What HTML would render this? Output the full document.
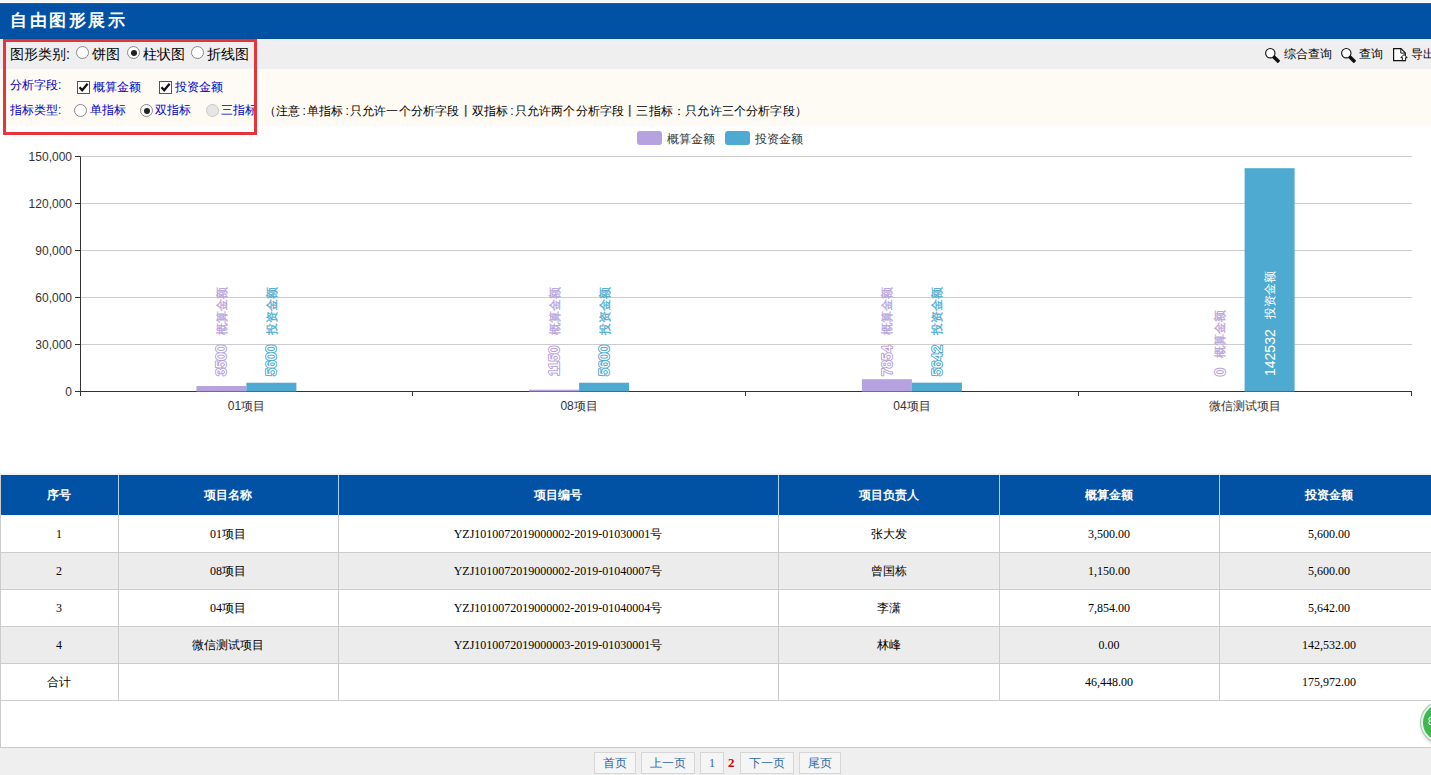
<!DOCTYPE html>
<html><head><meta charset="utf-8"><style>
*{box-sizing:border-box}
html,body{margin:0;padding:0}
body{width:1431px;height:775px;overflow:hidden;position:relative;background:#fff;font-family:"Liberation Sans",sans-serif;color:#000}
.abs{position:absolute}
#topstrip{left:0;top:0;width:1431px;height:2px;background:#f3f6fa}
#hdr{left:0;top:3px;width:1431px;height:36px;background:#0152a4;border-bottom:1px solid #0a4a8e}
#hdr span{position:absolute;left:10px;top:8px;font-size:17px;line-height:20px;color:#fff;letter-spacing:2.6px;font-weight:bold}
#tool{left:0;top:39px;width:1431px;height:30px;background:linear-gradient(#e2f1f8 0px,#e2f1f8 1px,#eef0ee 3px,#f1edf3 5px,#efefef 9px)}
#toolline{display:none}
#cream{left:0;top:69px;width:1431px;height:57px;background:#fefbf5}
#redbox{left:3px;top:39px;width:254px;height:96px;border:3px solid #e6353a}
.t14{font-size:14px;line-height:16px;white-space:nowrap}
.t12{font-size:12px;line-height:14px;white-space:nowrap}
.radio{position:absolute;width:13px;height:13px;border-radius:50%;border:1px solid #8a8a8a;background:#fff}
.radio.on::after{content:"";position:absolute;left:2.5px;top:2.5px;width:6px;height:6px;border-radius:50%;background:#222}
.radio.dis{background:#e6e6e6;border-color:#c8c8c8}
.chk{position:absolute;width:13px;height:13px;border:1px solid #555;background:#fff}
.blue{color:#0000c4}
.cell{position:absolute;text-align:center;font-size:12px;white-space:nowrap}
.th{color:#fff;font-weight:bold;line-height:40px;top:475px;height:40px}
.td{font-family:"Liberation Serif",serif;line-height:38px;height:37px}
#pager{left:0;top:747px;width:1431px;height:28px;background:#efefef;border-top:1px solid #cacaca}
.pbtn{position:absolute;top:752px;height:22px;border:1px solid #d6d6d6;background:#f5f5f5;color:#2c67a8;font-size:12px;line-height:20px;text-align:center}
</style></head><body>
<div id="topstrip" class="abs"></div><div class="abs" style="left:0;top:2px;width:1431px;height:1px;background:#fffffa"></div>
<div id="hdr" class="abs"><span>自由图形展示</span></div><div class="abs" style="left:0;top:3px;width:1431px;height:1px;background:#2f5a86"></div>
<div id="tool" class="abs"></div><div id="toolline" class="abs"></div><div id="cream" class="abs"></div>
<div class="abs t14" style="left:10px;top:46px">图形类别:</div>
<div class="radio" style="left:76px;top:46px"></div><div class="abs t14" style="left:92px;top:46px">饼图</div>
<div class="radio on" style="left:127px;top:46px"></div><div class="abs t14" style="left:143px;top:46px">柱状图</div>
<div class="radio" style="left:191px;top:46px"></div><div class="abs t14" style="left:207px;top:46px">折线图</div>
<svg class="abs" style="left:1264px;top:47px" width="16" height="16" viewBox="0 0 16 16"><circle cx="6.3" cy="6.2" r="4.7" fill="#fff" stroke="#111" stroke-width="1.1"/><path d="M9.2 10.6 L10.6 9.2 L15.2 13.8 L13.8 15.2 Z" fill="#111" stroke="#111" stroke-width="1.6" stroke-linejoin="round"/></svg>
<div class="abs t12" style="left:1284px;top:47px">综合查询</div>
<svg class="abs" style="left:1340px;top:47px" width="16" height="16" viewBox="0 0 16 16"><circle cx="6.3" cy="6.2" r="4.7" fill="#fff" stroke="#111" stroke-width="1.1"/><path d="M9.2 10.6 L10.6 9.2 L15.2 13.8 L13.8 15.2 Z" fill="#111" stroke="#111" stroke-width="1.6" stroke-linejoin="round"/></svg>
<div class="abs t12" style="left:1359px;top:47px">查询</div>
<svg class="abs" style="left:1392px;top:47px" width="17" height="16" viewBox="0 0 17 16"><path d="M1.6 1.6 H9 L13.3 5.9 V13.6 H1.6 Z" fill="#fff" stroke="#111" stroke-width="1.2"/><path d="M8.8 1.6 V6.1 H13.3" fill="none" stroke="#111" stroke-width="1"/><path d="M12 7.6 L15.3 10.6 H13.6 V13.6 H10.4 V10.6 H8.7 Z" fill="#fff" stroke="#111" stroke-width="1" stroke-linejoin="round"/></svg>
<div class="abs t12" style="left:1411px;top:47px">导出</div>
<div class="abs t12 blue" style="left:10px;top:78px">分析字段:</div>
<div class="chk" style="left:77px;top:81px"><svg width="11" height="11" viewBox="0 0 11 11" style="position:absolute;left:0;top:0"><path d="M1.5 5.2 L4.2 8.3 L9.6 1.8" fill="none" stroke="#111" stroke-width="2.2"/></svg></div><div class="abs t12 blue" style="left:93px;top:80px">概算金额</div>
<div class="chk" style="left:159px;top:81px"><svg width="11" height="11" viewBox="0 0 11 11" style="position:absolute;left:0;top:0"><path d="M1.5 5.2 L4.2 8.3 L9.6 1.8" fill="none" stroke="#111" stroke-width="2.2"/></svg></div><div class="abs t12 blue" style="left:175px;top:80px">投资金额</div>
<div class="abs t12 blue" style="left:10px;top:103px">指标类型:</div>
<div class="radio" style="left:74px;top:104px"></div><div class="abs t12 blue" style="left:90px;top:103px">单指标</div>
<div class="radio on" style="left:140px;top:104px"></div><div class="abs t12 blue" style="left:155px;top:103px">双指标</div>
<div class="radio dis" style="left:206px;top:104px"></div><div class="abs t12 blue" style="left:221px;top:103px">三指标</div>
<div class="abs t12" style="left:264px;top:104px;letter-spacing:0.18px">（注意<span style="padding:0 0.9px 0 2px">:</span>单指标<span style="padding:0 0.9px 0 2px">:</span>只允许一个分析字段<span style="font-weight:bold;color:#5a4a30">丨</span>双指标<span style="padding:0 0.9px 0 2px">:</span>只允许两个分析字段<span style="font-weight:bold;color:#5a4a30">丨</span>三指标：只允许三个分析字段）</div>
<div id="redbox" class="abs"></div>
<svg class="abs" style="left:0;top:0" width="1431" height="470" viewBox="0 0 1431 470">
<rect x="637" y="131" width="25" height="14" rx="3" fill="#b6a2de"/>
<text x="667" y="143" font-size="12" fill="#333">概算金额</text>
<rect x="725" y="131" width="25" height="14" rx="3" fill="#4eaad1"/>
<text x="755" y="143" font-size="12" fill="#333">投资金额</text>
<line x1="75" y1="391.5" x2="80.5" y2="391.5" stroke="#333" stroke-width="1"/>
<text x="72" y="395.5" font-size="12" fill="#333" text-anchor="end">0</text>
<line x1="81" y1="344.5" x2="1412" y2="344.5" stroke="#ccc" stroke-width="1"/>
<line x1="75" y1="344.5" x2="80.5" y2="344.5" stroke="#333" stroke-width="1"/>
<text x="72" y="348.5" font-size="12" fill="#333" text-anchor="end">30,000</text>
<line x1="81" y1="297.5" x2="1412" y2="297.5" stroke="#ccc" stroke-width="1"/>
<line x1="75" y1="297.5" x2="80.5" y2="297.5" stroke="#333" stroke-width="1"/>
<text x="72" y="301.5" font-size="12" fill="#333" text-anchor="end">60,000</text>
<line x1="81" y1="250.5" x2="1412" y2="250.5" stroke="#ccc" stroke-width="1"/>
<line x1="75" y1="250.5" x2="80.5" y2="250.5" stroke="#333" stroke-width="1"/>
<text x="72" y="254.5" font-size="12" fill="#333" text-anchor="end">90,000</text>
<line x1="81" y1="203.5" x2="1412" y2="203.5" stroke="#ccc" stroke-width="1"/>
<line x1="75" y1="203.5" x2="80.5" y2="203.5" stroke="#333" stroke-width="1"/>
<text x="72" y="207.5" font-size="12" fill="#333" text-anchor="end">120,000</text>
<line x1="81" y1="156.5" x2="1412" y2="156.5" stroke="#ccc" stroke-width="1"/>
<line x1="75" y1="156.5" x2="80.5" y2="156.5" stroke="#333" stroke-width="1"/>
<text x="72" y="160.5" font-size="12" fill="#333" text-anchor="end">150,000</text>
<line x1="80.5" y1="156.5" x2="80.5" y2="396.0" stroke="#333" stroke-width="1"/>
<line x1="80" y1="391.5" x2="1412" y2="391.5" stroke="#333" stroke-width="1"/>
<line x1="80.5" y1="391.5" x2="80.5" y2="396.0" stroke="#333" stroke-width="1"/>
<line x1="412.5" y1="391.5" x2="412.5" y2="396.0" stroke="#333" stroke-width="1"/>
<line x1="745.5" y1="391.5" x2="745.5" y2="396.0" stroke="#333" stroke-width="1"/>
<line x1="1078.5" y1="391.5" x2="1078.5" y2="396.0" stroke="#333" stroke-width="1"/>
<line x1="1411.5" y1="391.5" x2="1411.5" y2="396.0" stroke="#333" stroke-width="1"/>
<text x="246.4" y="410" font-size="12" fill="#333" text-anchor="middle">01项目</text>
<rect x="196.4" y="386.02" width="50" height="5.48" fill="#b6a2de"/>
<g transform="translate(226.4,376) rotate(-90)"><text x="0" y="0" fill="#fff" stroke="#b6a2de" stroke-width="2" paint-order="stroke" stroke-linejoin="round" font-size="14">3500</text></g>
<g transform="translate(225.9,334.8) rotate(-90)"><text x="0" y="0" fill="#b6a2de" stroke="#b6a2de" stroke-width="0.3" paint-order="stroke" stroke-linejoin="round" font-size="12">概算金额</text></g>
<rect x="246.4" y="382.73" width="50" height="8.77" fill="#4eaad1"/>
<g transform="translate(276.4,376) rotate(-90)"><text x="0" y="0" fill="#fff" stroke="#4eaad1" stroke-width="2" paint-order="stroke" stroke-linejoin="round" font-size="14">5600</text></g>
<g transform="translate(275.9,334.8) rotate(-90)"><text x="0" y="0" fill="#4eaad1" stroke="#4eaad1" stroke-width="0.3" paint-order="stroke" stroke-linejoin="round" font-size="12">投资金额</text></g>
<text x="579.1" y="410" font-size="12" fill="#333" text-anchor="middle">08项目</text>
<rect x="529.1" y="389.70" width="50" height="1.80" fill="#b6a2de"/>
<g transform="translate(559.1,376) rotate(-90)"><text x="0" y="0" fill="#fff" stroke="#b6a2de" stroke-width="2" paint-order="stroke" stroke-linejoin="round" font-size="14">1150</text></g>
<g transform="translate(558.6,334.8) rotate(-90)"><text x="0" y="0" fill="#b6a2de" stroke="#b6a2de" stroke-width="0.3" paint-order="stroke" stroke-linejoin="round" font-size="12">概算金额</text></g>
<rect x="579.1" y="382.73" width="50" height="8.77" fill="#4eaad1"/>
<g transform="translate(609.1,376) rotate(-90)"><text x="0" y="0" fill="#fff" stroke="#4eaad1" stroke-width="2" paint-order="stroke" stroke-linejoin="round" font-size="14">5600</text></g>
<g transform="translate(608.6,334.8) rotate(-90)"><text x="0" y="0" fill="#4eaad1" stroke="#4eaad1" stroke-width="0.3" paint-order="stroke" stroke-linejoin="round" font-size="12">投资金额</text></g>
<text x="911.9" y="410" font-size="12" fill="#333" text-anchor="middle">04项目</text>
<rect x="861.9" y="379.20" width="50" height="12.30" fill="#b6a2de"/>
<g transform="translate(891.9,376) rotate(-90)"><text x="0" y="0" fill="#fff" stroke="#b6a2de" stroke-width="2" paint-order="stroke" stroke-linejoin="round" font-size="14">7854</text></g>
<g transform="translate(891.4,334.8) rotate(-90)"><text x="0" y="0" fill="#b6a2de" stroke="#b6a2de" stroke-width="0.3" paint-order="stroke" stroke-linejoin="round" font-size="12">概算金额</text></g>
<rect x="911.9" y="382.66" width="50" height="8.84" fill="#4eaad1"/>
<g transform="translate(941.9,376) rotate(-90)"><text x="0" y="0" fill="#fff" stroke="#4eaad1" stroke-width="2" paint-order="stroke" stroke-linejoin="round" font-size="14">5642</text></g>
<g transform="translate(941.4,334.8) rotate(-90)"><text x="0" y="0" fill="#4eaad1" stroke="#4eaad1" stroke-width="0.3" paint-order="stroke" stroke-linejoin="round" font-size="12">投资金额</text></g>
<text x="1244.6" y="410" font-size="12" fill="#333" text-anchor="middle">微信测试项目</text>
<g transform="translate(1224.6,376) rotate(-90)"><text x="0" y="0" fill="#fff" stroke="#b6a2de" stroke-width="2" paint-order="stroke" stroke-linejoin="round" font-size="14">0</text></g>
<g transform="translate(1224.1,358.2) rotate(-90)"><text x="0" y="0" fill="#b6a2de" stroke="#b6a2de" stroke-width="0.3" paint-order="stroke" stroke-linejoin="round" font-size="12">概算金额</text></g>
<rect x="1244.6" y="168.20" width="50" height="223.30" fill="#4eaad1"/>
<g transform="translate(1274.6,376) rotate(-90)"><text x="0" y="0" fill="#fff" stroke="#4eaad1" stroke-width="2" paint-order="stroke" stroke-linejoin="round" font-size="14">142532</text></g>
<g transform="translate(1274.1,319.2) rotate(-90)"><text x="0" y="0" fill="#fff" stroke="#4eaad1" stroke-width="1.1" paint-order="stroke" stroke-linejoin="round" font-size="12">投资金额</text></g>
</svg>
<div class="abs" style="left:0;top:473px;width:1431px;height:2px;background:linear-gradient(#fdf3ea,#e6f5fc)"></div>
<div class="abs" style="left:0;top:475px;width:1431px;height:40px;background:#0152a4;border-top:1px solid #0b4a8c"></div>
<div class="abs" style="left:118px;top:475px;width:1px;height:40px;background:#a6d6f4"></div>
<div class="abs" style="left:338px;top:475px;width:1px;height:40px;background:#a6d6f4"></div>
<div class="abs" style="left:778px;top:475px;width:1px;height:40px;background:#a6d6f4"></div>
<div class="abs" style="left:999px;top:475px;width:1px;height:40px;background:#a6d6f4"></div>
<div class="abs" style="left:1219px;top:475px;width:1px;height:40px;background:#a6d6f4"></div>
<div class="cell th" style="left:0px;width:118px">序号</div>
<div class="cell th" style="left:118px;width:220px">项目名称</div>
<div class="cell th" style="left:338px;width:440px">项目编号</div>
<div class="cell th" style="left:778px;width:221px">项目负责人</div>
<div class="cell th" style="left:999px;width:220px">概算金额</div>
<div class="cell th" style="left:1219px;width:220px">投资金额</div>
<div class="abs" style="left:0;top:515px;width:1431px;height:37px;background:#fff"></div>
<div class="cell td" style="left:0px;width:118px;top:515px">1</div>
<div class="cell td" style="left:118px;width:220px;top:515px">01项目</div>
<div class="cell td" style="left:338px;width:440px;top:515px">YZJ1010072019000002-2019-01030001号</div>
<div class="cell td" style="left:778px;width:221px;top:515px">张大发</div>
<div class="cell td" style="left:999px;width:220px;top:515px">3,500.00</div>
<div class="cell td" style="left:1219px;width:220px;top:515px">5,600.00</div>
<div class="abs" style="left:0;top:552px;width:1431px;height:37px;background:#ececec"></div>
<div class="cell td" style="left:0px;width:118px;top:552px">2</div>
<div class="cell td" style="left:118px;width:220px;top:552px">08项目</div>
<div class="cell td" style="left:338px;width:440px;top:552px">YZJ1010072019000002-2019-01040007号</div>
<div class="cell td" style="left:778px;width:221px;top:552px">曾国栋</div>
<div class="cell td" style="left:999px;width:220px;top:552px">1,150.00</div>
<div class="cell td" style="left:1219px;width:220px;top:552px">5,600.00</div>
<div class="abs" style="left:0;top:589px;width:1431px;height:37px;background:#fff"></div>
<div class="cell td" style="left:0px;width:118px;top:589px">3</div>
<div class="cell td" style="left:118px;width:220px;top:589px">04项目</div>
<div class="cell td" style="left:338px;width:440px;top:589px">YZJ1010072019000002-2019-01040004号</div>
<div class="cell td" style="left:778px;width:221px;top:589px">李潇</div>
<div class="cell td" style="left:999px;width:220px;top:589px">7,854.00</div>
<div class="cell td" style="left:1219px;width:220px;top:589px">5,642.00</div>
<div class="abs" style="left:0;top:626px;width:1431px;height:37px;background:#ececec"></div>
<div class="cell td" style="left:0px;width:118px;top:626px">4</div>
<div class="cell td" style="left:118px;width:220px;top:626px">微信测试项目</div>
<div class="cell td" style="left:338px;width:440px;top:626px">YZJ1010072019000003-2019-01030001号</div>
<div class="cell td" style="left:778px;width:221px;top:626px">林峰</div>
<div class="cell td" style="left:999px;width:220px;top:626px">0.00</div>
<div class="cell td" style="left:1219px;width:220px;top:626px">142,532.00</div>
<div class="abs" style="left:0;top:663px;width:1431px;height:37px;background:#fff"></div>
<div class="cell td" style="left:0px;width:118px;top:663px">合计</div>
<div class="cell td" style="left:118px;width:220px;top:663px"></div>
<div class="cell td" style="left:338px;width:440px;top:663px"></div>
<div class="cell td" style="left:778px;width:221px;top:663px"></div>
<div class="cell td" style="left:999px;width:220px;top:663px">46,448.00</div>
<div class="cell td" style="left:1219px;width:220px;top:663px">175,972.00</div>
<div class="abs" style="left:0;top:552px;width:1431px;height:1px;background:#cccccc"></div>
<div class="abs" style="left:0;top:589px;width:1431px;height:1px;background:#cccccc"></div>
<div class="abs" style="left:0;top:626px;width:1431px;height:1px;background:#cccccc"></div>
<div class="abs" style="left:0;top:663px;width:1431px;height:1px;background:#cccccc"></div>
<div class="abs" style="left:0;top:700px;width:1431px;height:1px;background:#cccccc"></div>
<div class="abs" style="left:118px;top:515px;width:1px;height:185px;background:#cccccc"></div>
<div class="abs" style="left:338px;top:515px;width:1px;height:185px;background:#cccccc"></div>
<div class="abs" style="left:778px;top:515px;width:1px;height:185px;background:#cccccc"></div>
<div class="abs" style="left:999px;top:515px;width:1px;height:185px;background:#cccccc"></div>
<div class="abs" style="left:1219px;top:515px;width:1px;height:185px;background:#cccccc"></div>
<div class="abs" style="left:0;top:475px;width:1px;height:272px;background:#cccccc"></div>
<div id="pager" class="abs"></div>
<div class="pbtn" style="left:594px;width:42px">首页</div>
<div class="pbtn" style="left:641px;width:54px">上一页</div>
<div class="pbtn" style="left:700px;width:24px;font-family:'Liberation Serif',serif">1</div>
<div class="pbtn" style="left:740px;width:54px">下一页</div>
<div class="pbtn" style="left:799px;width:42px">尾页</div>
<div class="abs" style="left:728px;top:752px;font-family:'Liberation Serif',serif;font-weight:bold;color:#d40000;font-size:13px;line-height:22px">2</div>
<div class="abs" style="left:1421px;top:702px;width:41px;height:41px;border-radius:50%;background:#3fb84d;border:2px solid #e3f3e5;box-shadow:0 0 0 1px #a9c4ad,1px 2px 4px rgba(0,0,0,0.3)"></div>
<svg class="abs" style="left:1425px;top:714px" width="10" height="14" viewBox="0 0 10 14"><path d="M4 3.5 H9 M4 7 H9 M4 10.5 H9" stroke="#fff" stroke-width="1" fill="none"/><path d="M4.5 3.5 Q3 5.2 4.5 7 M4.5 7 Q3 8.8 4.5 10.5" stroke="#fff" stroke-width="1" fill="none"/></svg>
</body></html>
